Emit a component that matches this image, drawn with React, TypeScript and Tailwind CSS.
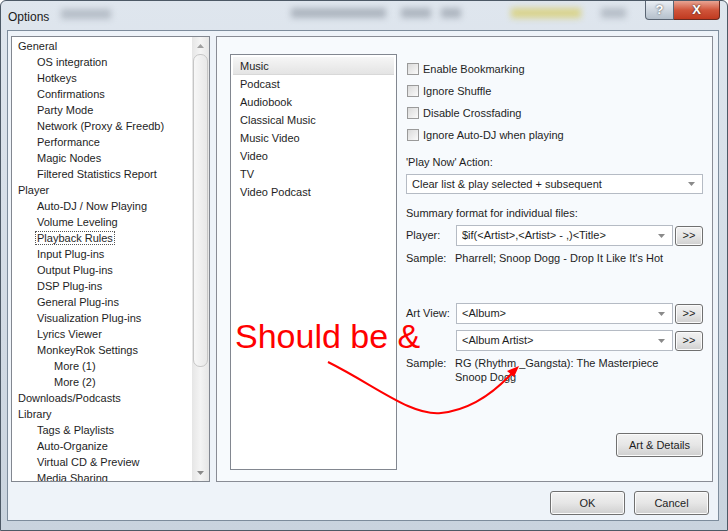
import React from 'react';

type TreeItem = { label: string; level: number; focus?: boolean };

const treeItems: TreeItem[] = [
  { label: 'General', level: 0 },
  { label: 'OS integration', level: 1 },
  { label: 'Hotkeys', level: 1 },
  { label: 'Confirmations', level: 1 },
  { label: 'Party Mode', level: 1 },
  { label: 'Network (Proxy & Freedb)', level: 1 },
  { label: 'Performance', level: 1 },
  { label: 'Magic Nodes', level: 1 },
  { label: 'Filtered Statistics Report', level: 1 },
  { label: 'Player', level: 0 },
  { label: 'Auto-DJ / Now Playing', level: 1 },
  { label: 'Volume Leveling', level: 1 },
  { label: 'Playback Rules', level: 1, focus: true },
  { label: 'Input Plug-ins', level: 1 },
  { label: 'Output Plug-ins', level: 1 },
  { label: 'DSP Plug-ins', level: 1 },
  { label: 'General Plug-ins', level: 1 },
  { label: 'Visualization Plug-ins', level: 1 },
  { label: 'Lyrics Viewer', level: 1 },
  { label: 'MonkeyRok Settings', level: 1 },
  { label: 'More (1)', level: 2 },
  { label: 'More (2)', level: 2 },
  { label: 'Downloads/Podcasts', level: 0 },
  { label: 'Library', level: 0 },
  { label: 'Tags & Playlists', level: 1 },
  { label: 'Auto-Organize', level: 1 },
  { label: 'Virtual CD & Preview', level: 1 },
  { label: 'Media Sharing', level: 1 },
];

const mediaTypes = ['Music', 'Podcast', 'Audiobook', 'Classical Music', 'Music Video', 'Video', 'TV', 'Video Podcast'];

const checks = ['Enable Bookmarking', 'Ignore Shuffle', 'Disable Crossfading', 'Ignore Auto-DJ when playing'];

const indent = ['pl-[6px]', 'pl-[25px]', 'pl-[42px]'];

const Arrow = () => (
  <svg width="7" height="4" viewBox="0 0 7 4" className="shrink-0">
    <path d="M0 0 L7 0 L3.5 4 Z" fill="#8a8a8a" />
  </svg>
);

const Combo = ({ text, className }: { text: string; className: string }) => (
  <div className={`flex items-center border border-[#b5bbc4] bg-white pl-[5px] pr-[7px] ${className}`}>
    <span className="flex-1 truncate">{text}</span>
    <Arrow />
  </div>
);

const Button = ({ label, className }: { label: string; className: string }) => (
  <div
    className={`flex items-center justify-center rounded-[3px] border border-[#707070] bg-gradient-to-b from-[#f2f2f2] via-[#e6e6e6] to-[#cfcfcf] shadow-[inset_0_0_0_1px_#fbfbfb] ${className}`}
  >
    {label}
  </div>
);

export default function App() {
  return (
    <div className="relative w-[728px] h-[531px] overflow-hidden text-[11px] text-[#1e1e1e] font-['Liberation_Sans',Arial,sans-serif] bg-gradient-to-b from-[#dfe6ee] to-[#c9d3de] border border-[#4d5966] rounded-t-[6px]">
      {/* blurred stuff seen through the glass frame */}
      <div className="absolute left-[60px] top-[8px] w-[50px] h-[10px] bg-[#8f98a3] blur-[3px] opacity-50" />
      <div className="absolute left-[290px] top-[7px] w-[95px] h-[10px] bg-[#7d8692] blur-[3px] opacity-50" />
      <div className="absolute left-[400px] top-[7px] w-[30px] h-[10px] bg-[#7d8692] blur-[3px] opacity-50" />
      <div className="absolute left-[440px] top-[7px] w-[20px] h-[10px] bg-[#7d8692] blur-[3px] opacity-50" />
      <div className="absolute left-[510px] top-[7px] w-[70px] h-[10px] bg-[#d7c84a] blur-[3px] opacity-60" />
      <div className="absolute left-[600px] top-[7px] w-[25px] h-[10px] bg-[#8f98a3] blur-[3px] opacity-50" />

      <div className="relative flex flex-col h-full">
        {/* title bar */}
        <div className="h-[29px] flex items-start">
          <span className="mt-[7px] ml-[7px] text-[12px] text-[#1a1a1a]">Options</span>
          <div className="ml-auto mr-[7px] flex">
            <div className="w-[29px] h-[19px] flex items-center justify-center rounded-bl-[4px] border border-t-0 border-[#5a6573] bg-gradient-to-b from-[#e9eef4] to-[#b5c0cc] text-[13px] font-bold text-white [text-shadow:0_0_2px_#333]">
              ?
            </div>
            <div className="w-[46px] h-[19px] flex items-center justify-center rounded-br-[4px] border border-l-0 border-t-0 border-[#6b2a20] bg-gradient-to-b from-[#e8a493] via-[#d0553b] to-[#c0391f] text-[13px] font-bold text-white [text-shadow:0_0_2px_#222]">
              X
            </div>
          </div>
        </div>

        <div className="flex h-[491px]">
          <div className="w-[6px]" />
          {/* client area */}
          <div className="w-[712px] h-full flex flex-col border border-[#7d8c9c] bg-[#eef3f9] pl-[3px] pt-[5px] pr-[5px]">
            <div className="flex h-[446px] gap-[6px]">
              {/* options tree */}
              <div className="w-[199px] h-full flex border border-[#828790] bg-white">
                <div className="flex-1 overflow-hidden pt-[1px]">
                  {treeItems.map((item) => (
                    <div key={item.label} className={`h-[16px] leading-[16px] whitespace-nowrap ${indent[item.level]}`}>
                      {item.focus ? (
                        <span className="border border-dotted border-[#555] px-[1px] -ml-[2px]">{item.label}</span>
                      ) : (
                        item.label
                      )}
                    </div>
                  ))}
                </div>
                <div className="w-[17px] h-full flex flex-col bg-gradient-to-r from-[#e6e6e6] via-[#f4f4f4] to-[#e6e6e6]">
                  <div className="h-[17px] flex items-center justify-center">
                    <svg width="7" height="4" viewBox="0 0 7 4">
                      <path d="M0 4 L7 4 L3.5 0 Z" fill="#a0a0a0" />
                    </svg>
                  </div>
                  <div className="h-[313px] mx-[1px] rounded-[7px] border border-[#c6c6c6] bg-gradient-to-r from-[#f7f7f7] to-[#e8e8e8]" />
                  <div className="flex-1" />
                  <div className="h-[17px] flex items-center justify-center">
                    <Arrow />
                  </div>
                </div>
              </div>

              {/* playback rules panel */}
              <div className="w-[497px] h-full flex border border-[#898c95] bg-[#f7fafd] pl-[13px] pt-[17px] pb-[11px]">
                <div className="w-[167px] h-full border border-[#828790] bg-white p-[2px]">
                  {mediaTypes.map((m, i) => (
                    <div
                      key={m}
                      className={`h-[18px] leading-[18px] pl-[7px] ${i === 0 ? 'bg-gradient-to-b from-[#f6f6f6] to-[#e4e4e4] border-b border-[#d8d8d8]' : ''}`}
                    >
                      {m}
                    </div>
                  ))}
                </div>

                <div className="w-[297px] ml-[9px] flex flex-col">
                  <div className="mt-[4px]">
                    {checks.map((c) => (
                      <div key={c} className="h-[22px] flex items-center">
                        <div className="w-[12px] h-[12px] border border-[#9a9a9a] bg-gradient-to-br from-[#dadada] to-[#fafafa] ml-[1px] mr-[4px]" />
                        <span>{c}</span>
                      </div>
                    ))}
                  </div>
                  <div className="mt-[8px] h-[16px] leading-[16px]">'Play Now' Action:</div>
                  <Combo text="Clear list & play selected + subsequent" className="mt-[4px] h-[20px] pl-[5px]" />
                  <div className="mt-[11px] h-[16px] leading-[16px]">Summary format for individual files:</div>
                  <div className="mt-[4px] flex items-center">
                    <span className="w-[50px]">Player:</span>
                    <Combo text="$if(<Artist>,<Artist> - ,)<Title>" className="w-[217px] h-[21px]" />
                    <Button label=">>" className="ml-[2px] w-[28px] h-[20px]" />
                  </div>
                  <div className="mt-[4px] h-[16px] leading-[16px] flex">
                    <span className="w-[49px]">Sample:</span>
                    <span>Pharrell; Snoop Dogg - Drop It Like It's Hot</span>
                  </div>
                  <div className="mt-[37px] flex items-center">
                    <span className="w-[50px]">Art View:</span>
                    <Combo text="<Album>" className="w-[217px] h-[21px]" />
                    <Button label=">>" className="ml-[2px] w-[28px] h-[20px]" />
                  </div>
                  <div className="mt-[6px] flex items-center">
                    <span className="w-[50px]" />
                    <Combo text="<Album Artist>" className="w-[217px] h-[21px]" />
                    <Button label=">>" className="ml-[2px] w-[28px] h-[20px]" />
                  </div>
                  <div className="mt-[5px] flex leading-[14px]">
                    <span className="w-[49px]">Sample:</span>
                    <div className="flex flex-col">
                      <span>RG (Rhythm _Gangsta): The Masterpiece</span>
                      <span>Snoop Dogg</span>
                    </div>
                  </div>
                  <div className="mt-[49px] flex justify-end">
                    <Button label="Art & Details" className="w-[87px] h-[24px]" />
                  </div>
                </div>
              </div>
            </div>

            <div className="mt-[9px] flex justify-end gap-[9px] pr-[4px]">
              <Button label="OK" className="w-[75px] h-[24px] border-[#3c7fb1]" />
              <Button label="Cancel" className="w-[75px] h-[24px]" />
            </div>
          </div>
          <div className="flex-1" />
        </div>
      </div>

      {/* red annotation */}
      <div className="absolute left-[234px] top-[318px] text-[34px] leading-none text-[#ff0000] font-['Liberation_Sans',Arial,sans-serif]">
        Should be &amp;
      </div>
      <svg className="absolute left-0 top-0 pointer-events-none" width="728" height="531" viewBox="0 0 728 531">
        <path
          d="M327 361 C375 385 410 415 440 412 C470 409 495 390 513 370"
          fill="none"
          stroke="#ff0000"
          strokeWidth="2"
        />
        <path d="M518 365 L506 370 L513 376 Z" fill="#ff0000" />
      </svg>
    </div>
  );
}
